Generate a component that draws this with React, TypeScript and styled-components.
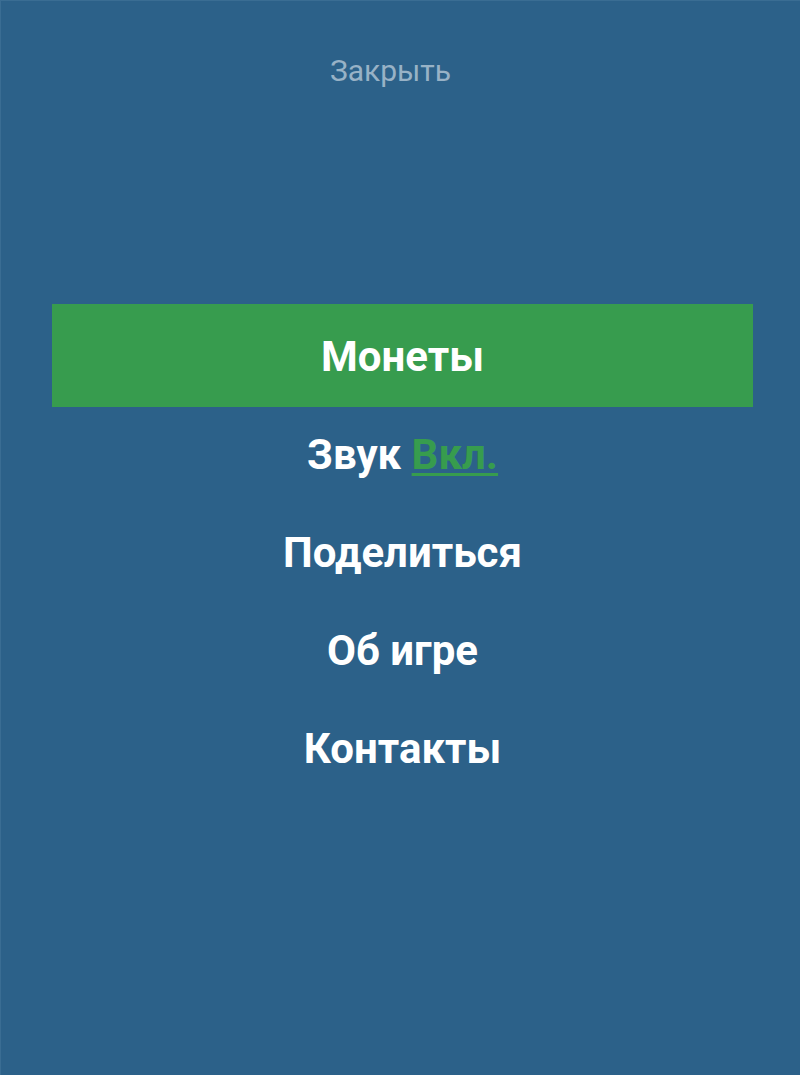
import styled, {createGlobalStyle} from "styled-components";

const GlobalStyle = createGlobalStyle`
  html, body {
    margin: 0;
    padding: 0;
    background: #2c6189;
  }
  * {
    box-sizing: border-box;
  }
`

type MenuItem = {
    label: string,
    active?: boolean,
    toggle?: string
}

const items: MenuItem[] = [
    {label: "Монеты", active: true},
    {label: "Звук", toggle: "Вкл."},
    {label: "Поделиться"},
    {label: "Об игре"},
    {label: "Контакты"},
]

export default function App() {
    return <>
        <GlobalStyle/>
        <StyledScreen>
            <StyledClose>Закрыть</StyledClose>
            <StyledMenu>
                {items.map(item =>
                    <StyledItem key={item.label} $active={item.active}>
                        {item.label}
                        {item.toggle && <> <StyledToggle>{item.toggle}</StyledToggle></>}
                    </StyledItem>
                )}
            </StyledMenu>
        </StyledScreen>
    </>
}

const StyledScreen = styled.div`
  height: 1075px;
  background: #2c6189;
  border-left: 1px solid #3a6d93;
  border-top: 1px solid #3a6d93;
  display: flex;
  flex-direction: column;
  font-family: Roboto, "Liberation Sans", sans-serif;
`

const StyledClose = styled.button`
  align-self: center;
  margin: 48px 0 0 -20px;
  padding: 0;
  background: none;
  border: none;
  font-family: inherit;
  font-size: 30px;
  line-height: 44px;
  color: #98b2c6;
  cursor: pointer;
`

const StyledMenu = styled.ul`
  list-style: none;
  margin: 211px 47px 0 51px;
  padding: 0;
  display: flex;
  flex-direction: column;
`

const StyledItem = styled.li<{ $active?: boolean }>`
  height: ${p => p.$active ? "103px" : "98px"};
  margin-bottom: ${p => p.$active ? "-3px" : "0"};
  padding-top: 2px;
  display: flex;
  align-items: center;
  justify-content: center;
  white-space: pre;
  font-size: 42px;
  font-weight: 700;
  color: #ffffff;
  background: ${p => p.$active ? "#379c4e" : "transparent"};
`

const StyledToggle = styled.span`
  color: #379c4e;
  text-decoration: underline;
  text-decoration-thickness: 3px;
  text-underline-offset: 4px;
`
